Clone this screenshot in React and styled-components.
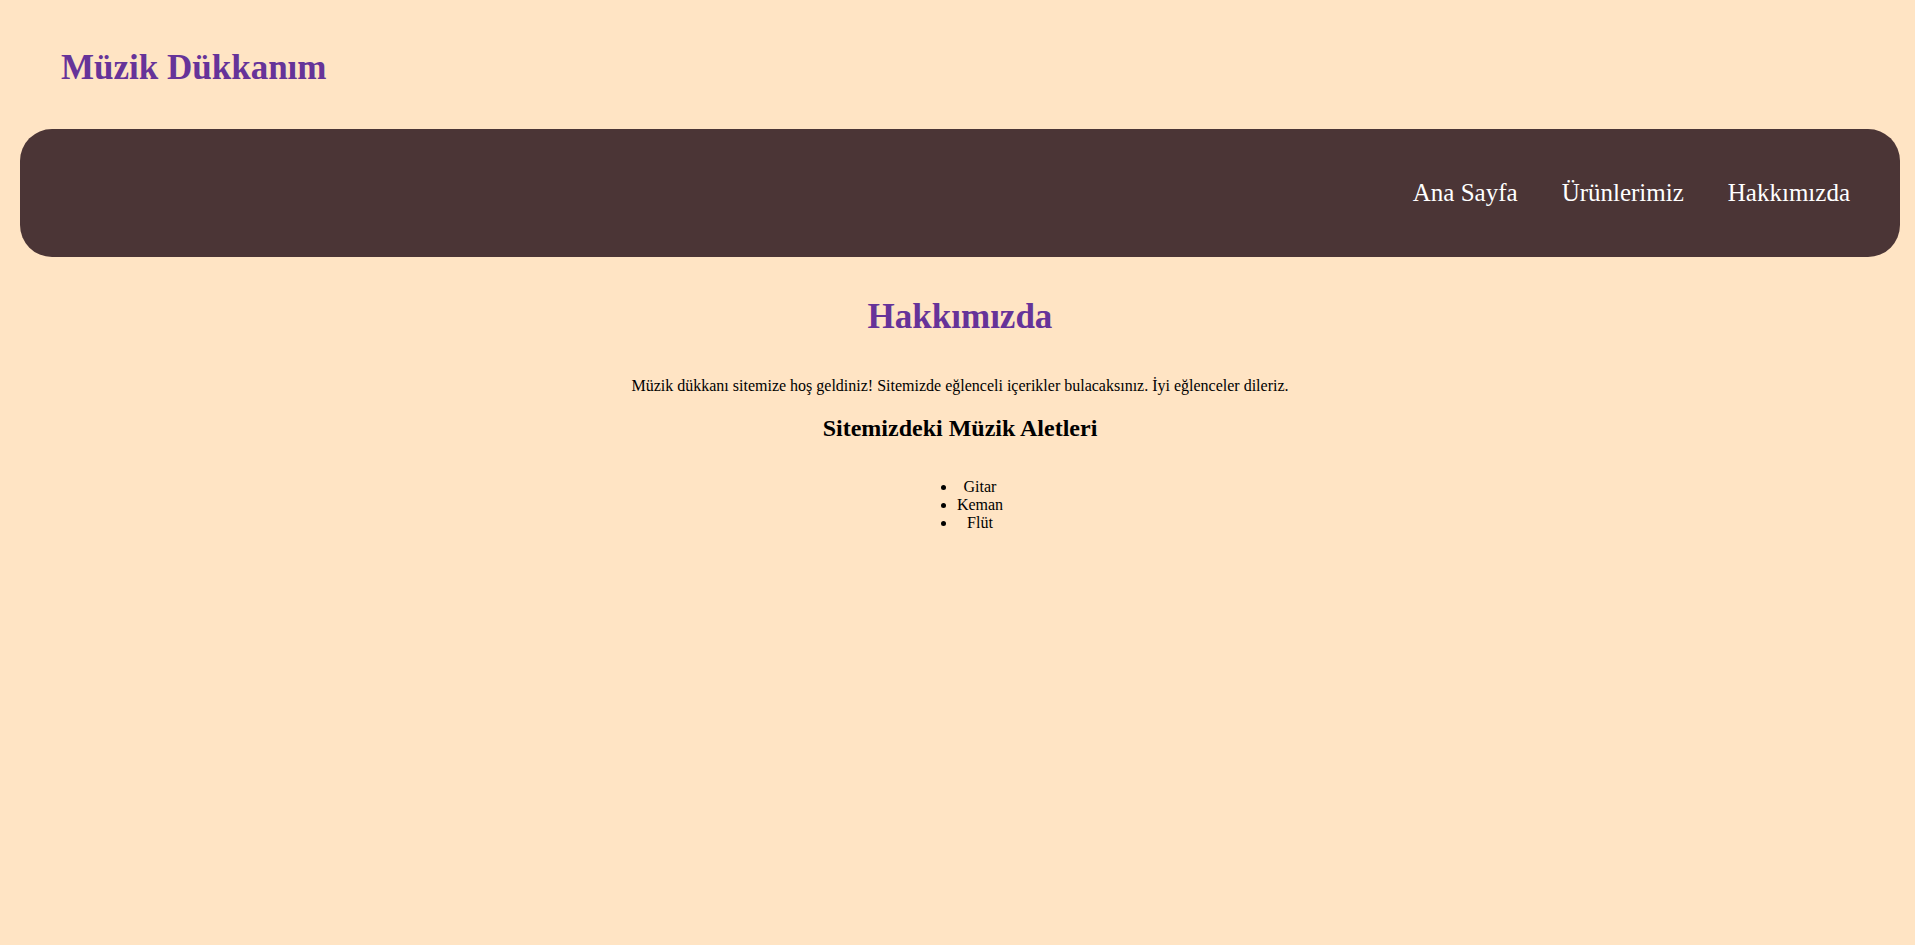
import styled, { createGlobalStyle } from 'styled-components'

const GlobalStyle = createGlobalStyle`
    body {
        margin: 8px;
        background: #ffe4c4;
        font-family: "Liberation Serif", "Times New Roman", serif;
    }
`

const Header = styled.header`
    padding: 40px 53px 41px;
`

const Title = styled.h1`
    margin: 0;
    font-size: 35px;
    font-weight: bold;
    color: #663399;
`

const NavBar = styled.nav`
    margin: 0 7px 0 12px;
    height: 128px;
    border-radius: 32px;
    background: #4b3536;
    display: flex;
    justify-content: flex-end;
    align-items: center;
    padding-right: 50px;
`

const NavList = styled.ul`
    list-style: none;
    margin: 0;
    padding: 0;
    display: flex;
    gap: 44px;
`

const NavLink = styled.a`
    color: #ffffff;
    font-size: 25px;
    text-decoration: none;
`

const Main = styled.main`
    margin: 0 7px 0 12px;
    display: flex;
    flex-direction: column;
    align-items: center;
    text-align: center;
`

const PageTitle = styled.h1`
    margin: 40px 0 40px;
    font-size: 35px;
    color: #663399;
`

const Intro = styled.p`
    margin: 0 0 20px;
    font-size: 16px;
`

const SubTitle = styled.h2`
    margin: 0 0 36px;
    font-size: 24px;
`

const Instruments = styled.ul`
    margin: 0;
    padding-left: 40px;
    font-size: 16px;
`

export default function App() {
    const links = ['Ana Sayfa', 'Ürünlerimiz', 'Hakkımızda']
    const instruments = ['Gitar', 'Keman', 'Flüt']

    return (
        <>
            <GlobalStyle />
            <Header>
                <Title>Müzik Dükkanım</Title>
            </Header>
            <NavBar>
                <NavList>
                    {links.map(l => (
                        <li key={l}>
                            <NavLink href="#">{l}</NavLink>
                        </li>
                    ))}
                </NavList>
            </NavBar>
            <Main>
                <PageTitle>Hakkımızda</PageTitle>
                <Intro>
                    Müzik dükkanı sitemize hoş geldiniz! Sitemizde eğlenceli içerikler bulacaksınız. İyi eğlenceler dileriz.
                </Intro>
                <SubTitle>Sitemizdeki Müzik Aletleri</SubTitle>
                <Instruments>
                    {instruments.map(i => <li key={i}>{i}</li>)}
                </Instruments>
            </Main>
        </>
    )
}
